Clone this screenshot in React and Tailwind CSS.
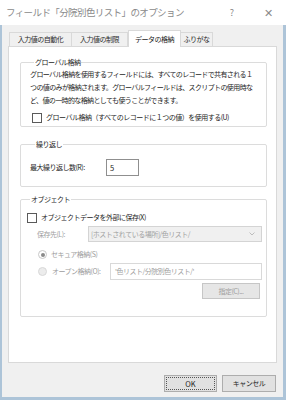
import React from "react";

const jp = { fontFamily: '"Noto Sans CJK JP", "Noto Sans", sans-serif' };

function Tab({ label, active, w }) {
 return (
  <div
   className={
    active
     ? "relative z-10 -mb-px h-[17px] bg-white border border-b-0 border-[#d9d9d9] flex items-center justify-center text-[#1a1a1a]"
     : "h-[14px] bg-[#f0f0f0] border border-b-0 border-[#d9d9d9] -ml-px flex items-center justify-center text-[#2a2a2a]"
   }
   style={{ width: w }}
  >
   <span className="whitespace-nowrap">{label}</span>
  </div>
 );
}

function Check({ className = "" }) {
 return <div className={"w-[10px] h-[10px] shrink-0 bg-white border border-[#5a5a5a] " + className} />;
}

export default function App() {
 return (
  <div
   className="w-[286px] h-[400px] flex flex-col overflow-hidden text-[7px] tracking-[-0.5px] leading-[13px] text-[#1e1e1e]"
   style={jp}
  >
   {/* title bar */}
   <div className="h-[25px] shrink-0 bg-white flex items-center pl-[6px] text-[#8a8a8a]">
    <span className="text-[9.5px] tracking-[-0.6px] whitespace-nowrap">
     フィールド「分院別色リスト」のオプション
    </span>
    <span className="ml-auto mr-[30px] text-[9px] tracking-normal">?</span>
    <span className="mr-[13px] text-[11px] tracking-normal font-light">✕</span>
   </div>

   <div className="flex-1 flex flex-col bg-[#f0f0f0] border-l-2 border-r-[3px] border-b-[3px] border-[#adc4d8] px-[6px]">
    {/* tabs */}
    <div className="mt-[5px] h-[16px] flex items-end pl-[2px]">
     <Tab label="入力値の自動化" w={63} />
     <Tab label="入力値の制限" w={57} />
     <Tab label="データの格納" w={53} active />
     <Tab label="ふりがな" w={33} />
    </div>

    {/* panel */}
    <div className="h-[317px] bg-white border border-[#d9d9d9] pl-[11px] pr-[9px] pt-[9px]">
     <fieldset className="border border-[#dcdcdc] rounded-[2px] pl-[9px] pb-[2px]">
      <legend className="ml-[4px] px-[1px] leading-[12px]">グローバル格納</legend>
      <div className="whitespace-nowrap tracking-[-0.62px]">
       <div>グローバル格納を使用するフィールドには、すべてのレコードで共有される１</div>
       <div>つの値のみが格納されます。グローバルフィールドは、スクリプトの使用時な</div>
       <div>ど、値の一時的な格納としても使うことができます。</div>
      </div>
      <div className="mt-[4px] flex items-center gap-[4px] pl-[2px] whitespace-nowrap">
       <Check />
       <span>グローバル格納（すべてのレコードに１つの値）を使用する(U)</span>
      </div>
     </fieldset>

     <fieldset className="mt-[11px] border border-[#dcdcdc] rounded-[2px] pl-[9px] pt-[9px] pb-[10px]">
      <legend className="ml-[5px] px-[1px] leading-[12px]">繰り返し</legend>
      <div className="flex items-center h-[17px]">
       <span className="w-[76px] whitespace-nowrap">最大繰り返し数(R):</span>
       <div className="w-[33px] h-[17px] border border-[#8f8f8f] bg-white flex items-center pl-[3px] text-[7.5px]">5</div>
      </div>
     </fieldset>

     <fieldset className="mt-[6px] border border-[#dcdcdc] rounded-[2px] pl-[6px] pr-[4px] pt-[6px] pb-[17px]">
      <legend className="ml-[3px] px-[1px] leading-[12px]">オブジェクト</legend>
      <div className="flex items-center gap-[4px] h-[13px] whitespace-nowrap">
       <Check />
       <span>オブジェクトデータを外部に保存(X)</span>
      </div>
      <div className="mt-[2px] flex items-center h-[16px] pl-[10px] text-[#a0a0a0]">
       <span className="w-[51px] whitespace-nowrap">保存先(L):</span>
       <div className="flex-1 h-[16px] bg-[#f0f0f0] border border-[#d4d4d4] flex items-center pl-[2px] pr-[6px]">
        <span className="whitespace-nowrap">[ホストされている場所]/色リスト/</span>
        <svg className="ml-auto" width="6" height="4" viewBox="0 0 6 4">
         <path d="M0.5 0.5 L3 3 L5.5 0.5" fill="none" stroke="#b0b0b0" strokeWidth="0.8" />
        </svg>
       </div>
      </div>
      <div className="mt-[6px] flex items-center h-[13px] pl-[11px] text-[#9d9d9d] whitespace-nowrap">
       <div className="w-[9px] h-[9px] rounded-full border border-[#c8c8c8] bg-white flex items-center justify-center">
        <div className="w-[4px] h-[4px] rounded-full bg-[#8a8a8a]" />
       </div>
       <span className="ml-[4px]">セキュア格納(S)</span>
      </div>
      <div className="mt-[2px] flex items-center h-[17px] pl-[11px] text-[#9d9d9d] whitespace-nowrap">
       <div className="w-[9px] h-[9px] rounded-full border border-[#d8d8d8] bg-[#ececec]" />
       <span className="ml-[5px] w-[58px]">オープン格納(O):</span>
       <div className="flex-1 h-[17px] border border-[#d9d9d9] bg-white flex items-center pl-[4px]">
        '色リスト/分院別色リスト/'
       </div>
      </div>
      <div className="mt-[3px] flex justify-end pr-[2px]">
       <div className="w-[58px] h-[16px] bg-[#e6e6e6] border border-[#c6c6c6] flex items-center justify-center text-[#9d9d9d]">
        指定(C)...
       </div>
      </div>
     </fieldset>
    </div>

    {/* buttons */}
    <div className="mt-[12px] flex justify-end gap-[5px] pr-[1px]">
     <div className="w-[53px] h-[17px] bg-[#e1e1e1] border border-[#adadad] p-[1px]">
      <div className="w-full h-full border border-dotted border-[#555] flex items-center justify-center tracking-normal text-[7.5px]">
       OK
      </div>
     </div>
     <div className="w-[54px] h-[17px] bg-[#e1e1e1] border border-[#adadad] flex items-center justify-center">
      キャンセル
     </div>
    </div>
   </div>
  </div>
 );
}
